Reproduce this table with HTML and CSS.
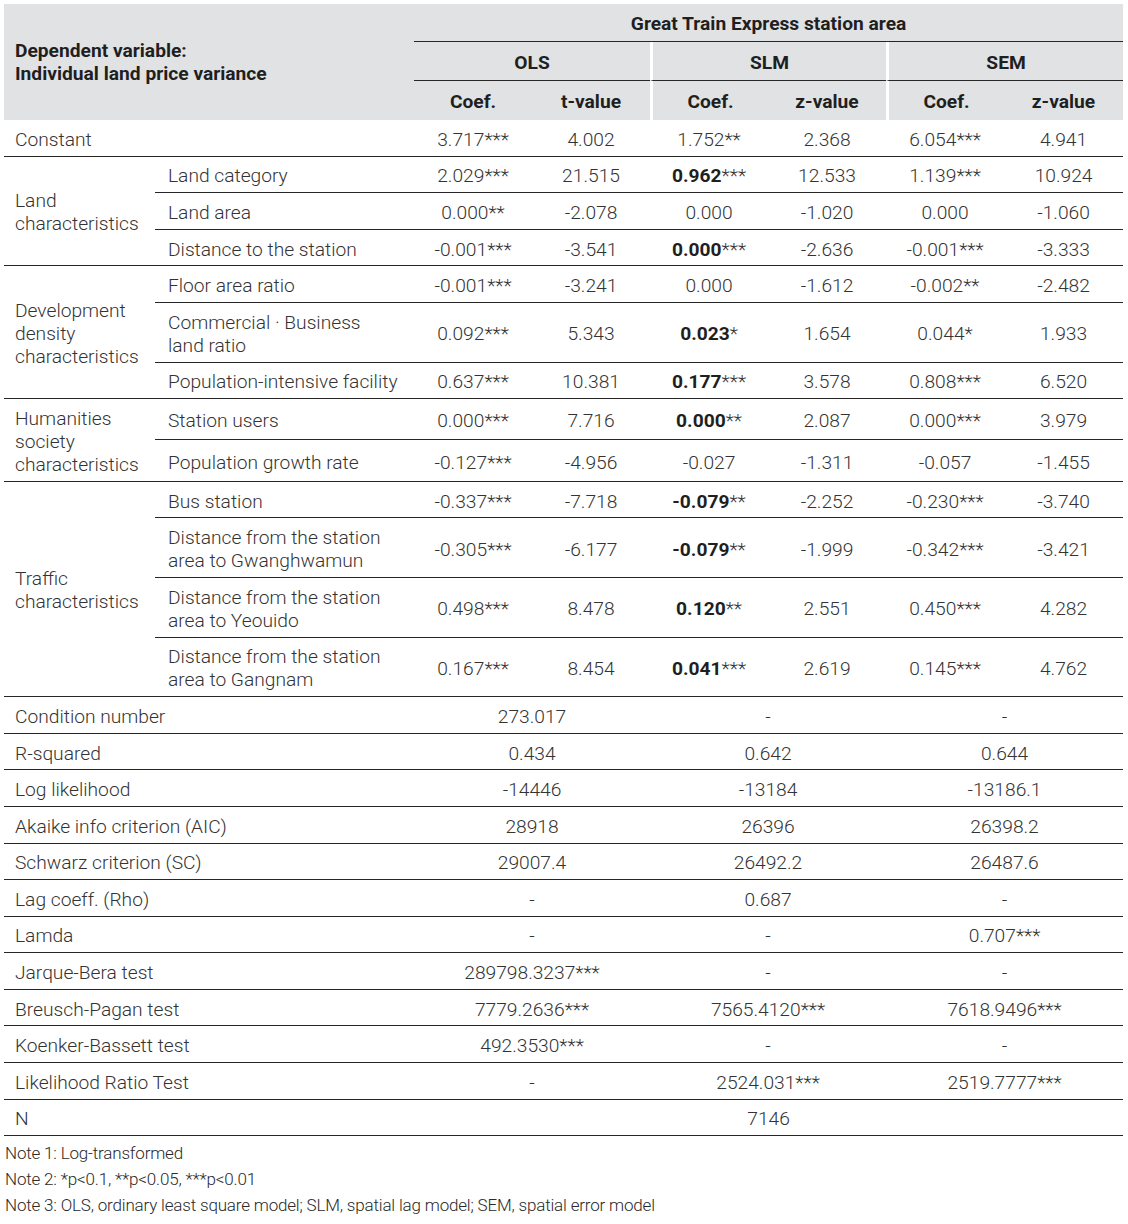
FILE: index.html
```html
<!DOCTYPE html>
<html lang="en">
<head>
<meta charset="utf-8">
<title>Great Train Express station area regression</title>
<link rel="stylesheet" href="styles.css">
</head>
<body>
<table class="tbl">
  <colgroup>
    <col class="c-group"><col class="c-var">
    <col class="c-num"><col class="c-num"><col class="c-num"><col class="c-num"><col class="c-num"><col class="c-last">
  </colgroup>
  <thead>
    <tr class="h1">
      <th class="dep" colspan="2" rowspan="3">Dependent variable:<br>Individual land price variance</th>
      <th class="span-top" colspan="6">Great Train Express station area</th>
    </tr>
    <tr class="h2">
      <th class="model" colspan="2">OLS</th>
      <th class="model sep" colspan="2">SLM</th>
      <th class="model sep" colspan="2">SEM</th>
    </tr>
    <tr class="h3">
      <th>Coef.</th><th>t-value</th>
      <th class="sep">Coef.</th><th>z-value</th>
      <th class="sep">Coef.</th><th>z-value</th>
    </tr>
  </thead>
  <tbody>
    <tr>
      <td class="lbl" colspan="2">Constant</td>
      <td>3.717***</td><td>4.002</td><td>1.752**</td><td>2.368</td><td>6.054***</td><td>4.941</td>
    </tr>
    <tr>
      <td class="lbl grp" rowspan="3">Land<br>characteristics</td>
      <td class="lbl var">Land category</td>
      <td>2.029***</td><td>21.515</td><td><b>0.962</b>***</td><td>12.533</td><td>1.139***</td><td>10.924</td>
    </tr>
    <tr>
      <td class="lbl var">Land area</td>
      <td>0.000**</td><td>-2.078</td><td>0.000</td><td>-1.020</td><td>0.000</td><td>-1.060</td>
    </tr>
    <tr>
      <td class="lbl var">Distance to the station</td>
      <td>-0.001***</td><td>-3.541</td><td><b>0.000</b>***</td><td>-2.636</td><td>-0.001***</td><td>-3.333</td>
    </tr>
    <tr>
      <td class="lbl grp" rowspan="3">Development<br>density<br>characteristics</td>
      <td class="lbl var">Floor area ratio</td>
      <td>-0.001***</td><td>-3.241</td><td>0.000</td><td>-1.612</td><td>-0.002**</td><td>-2.482</td>
    </tr>
    <tr>
      <td class="lbl var">Commercial · Business<br>land ratio</td>
      <td>0.092***</td><td>5.343</td><td><b>0.023</b>*</td><td>1.654</td><td>0.044*</td><td>1.933</td>
    </tr>
    <tr>
      <td class="lbl var">Population-intensive facility</td>
      <td>0.637***</td><td>10.381</td><td><b>0.177</b>***</td><td>3.578</td><td>0.808***</td><td>6.520</td>
    </tr>
    <tr>
      <td class="lbl grp" rowspan="2">Humanities<br>society<br>characteristics</td>
      <td class="lbl var">Station users</td>
      <td>0.000***</td><td>7.716</td><td><b>0.000</b>**</td><td>2.087</td><td>0.000***</td><td>3.979</td>
    </tr>
    <tr>
      <td class="lbl var">Population growth rate</td>
      <td>-0.127***</td><td>-4.956</td><td>-0.027</td><td>-1.311</td><td>-0.057</td><td>-1.455</td>
    </tr>
    <tr>
      <td class="lbl grp" rowspan="4">Traffic<br>characteristics</td>
      <td class="lbl var">Bus station</td>
      <td>-0.337***</td><td>-7.718</td><td><b>-0.079</b>**</td><td>-2.252</td><td>-0.230***</td><td>-3.740</td>
    </tr>
    <tr>
      <td class="lbl var">Distance from the station<br>area to Gwanghwamun</td>
      <td>-0.305***</td><td>-6.177</td><td><b>-0.079</b>**</td><td>-1.999</td><td>-0.342***</td><td>-3.421</td>
    </tr>
    <tr>
      <td class="lbl var">Distance from the station<br>area to Yeouido</td>
      <td>0.498***</td><td>8.478</td><td><b>0.120</b>**</td><td>2.551</td><td>0.450***</td><td>4.282</td>
    </tr>
    <tr>
      <td class="lbl var">Distance from the station<br>area to Gangnam</td>
      <td>0.167***</td><td>8.454</td><td><b>0.041</b>***</td><td>2.619</td><td>0.145***</td><td>4.762</td>
    </tr>
    <tr>
      <td class="lbl" colspan="2">Condition number</td>
      <td colspan="2">273.017</td><td colspan="2">-</td><td colspan="2">-</td>
    </tr>
    <tr>
      <td class="lbl" colspan="2">R-squared</td>
      <td colspan="2">0.434</td><td colspan="2">0.642</td><td colspan="2">0.644</td>
    </tr>
    <tr>
      <td class="lbl" colspan="2">Log likelihood</td>
      <td colspan="2">-14446</td><td colspan="2">-13184</td><td colspan="2">-13186.1</td>
    </tr>
    <tr>
      <td class="lbl" colspan="2">Akaike info criterion (AIC)</td>
      <td colspan="2">28918</td><td colspan="2">26396</td><td colspan="2">26398.2</td>
    </tr>
    <tr>
      <td class="lbl" colspan="2">Schwarz criterion (SC)</td>
      <td colspan="2">29007.4</td><td colspan="2">26492.2</td><td colspan="2">26487.6</td>
    </tr>
    <tr>
      <td class="lbl" colspan="2">Lag coeff. (Rho)</td>
      <td colspan="2">-</td><td colspan="2">0.687</td><td colspan="2">-</td>
    </tr>
    <tr>
      <td class="lbl" colspan="2">Lamda</td>
      <td colspan="2">-</td><td colspan="2">-</td><td colspan="2">0.707***</td>
    </tr>
    <tr>
      <td class="lbl" colspan="2">Jarque-Bera test</td>
      <td colspan="2">289798.3237***</td><td colspan="2">-</td><td colspan="2">-</td>
    </tr>
    <tr>
      <td class="lbl" colspan="2">Breusch-Pagan test</td>
      <td colspan="2">7779.2636***</td><td colspan="2">7565.4120***</td><td colspan="2">7618.9496***</td>
    </tr>
    <tr>
      <td class="lbl" colspan="2">Koenker-Bassett test</td>
      <td colspan="2">492.3530***</td><td colspan="2">-</td><td colspan="2">-</td>
    </tr>
    <tr>
      <td class="lbl" colspan="2">Likelihood Ratio Test</td>
      <td colspan="2">-</td><td colspan="2">2524.031***</td><td colspan="2">2519.7777***</td>
    </tr>
    <tr>
      <td class="lbl" colspan="2">N</td>
      <td colspan="6">7146</td>
    </tr>
  </tbody>
</table>
<div class="notes">
  <p>Note 1: Log-transformed</p>
  <p>Note 2: *p&lt;0.1, **p&lt;0.05, ***p&lt;0.01</p>
  <p>Note 3: OLS, ordinary least square model; SLM, spatial lag model; SEM, spatial error model</p>
</div>
</body>
</html>
```
FILE: styles.css
```css
html, body {
  margin: 0;
  padding: 0;
  background: #ffffff;
}
body {
  padding: 4px 0 0 4px;
  font-family: Roboto, "Liberation Sans", sans-serif;
  color: #333333;
}
.tbl {
  border-collapse: separate;
  border-spacing: 0;
  width: 1119px;
  table-layout: fixed;
  font-size: 19.2px;
  font-weight: 300;
  line-height: 23px;
}
.c-group { width: 151px; }
.c-var { width: 259px; }
.c-num { width: 118px; }
.c-last { width: 119px; }

thead th {
  background: #e1e2e4;
  color: #1f1f1f;
  font-weight: 700;
  font-size: 19.2px;
  text-align: center;
  padding: 2px 0 0;
}
.h1 th { height: 35px; }
.h2 th { height: 36px; }
.h3 th { height: 37px; }
.h1 th.span-top,
.h2 th.model {
  border-bottom: 1px solid #262626;
}
th.dep {
  text-align: left;
  padding: 0 0 0 11px;
  vertical-align: middle;
}
th.sep {
  border-left: 3px solid #ffffff;
}

tbody td {
  text-align: center;
  padding: 7.8px 0 4.8px;
  border-bottom: 1px solid #262626;
  vertical-align: middle;
  white-space: nowrap;
}
tbody td b {
  font-weight: 700;
  color: #1f1f1f;
}
td.lbl {
  text-align: left;
  padding-left: 11px;
}
td.var {
  padding-left: 13px;
}
.notes {
  margin-top: 4px;
  margin-left: -4px;
  font-size: 17px;
  font-weight: 300;
  line-height: 26px;
  color: #2a2a2a;
  letter-spacing: -0.18px;
}
.notes p {
  margin: 0;
  padding-left: 5px;
}
```
